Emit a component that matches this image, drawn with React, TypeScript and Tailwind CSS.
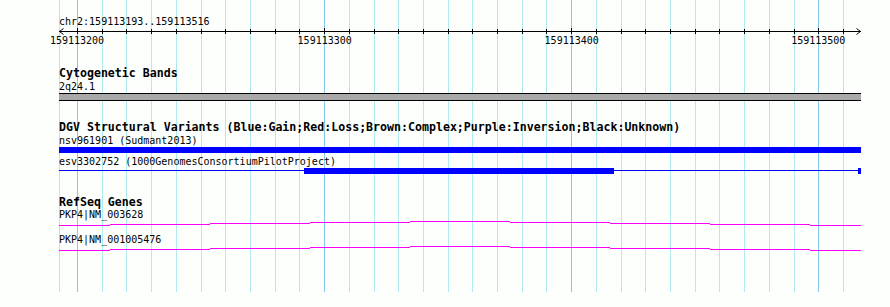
import React from 'react'

// track geometry: x of base 159113200 is 77, 2.471 px per base
const LEFT = 59
const WIDTH = 802
const STEP = 24.71
const majors = [
  { x: 77, label: '159113200' },
  { x: 324.7, label: '159113300' },
  { x: 571.7, label: '159113400' },
  { x: 818.3, label: '159113500' },
]

const gridLines = [
  { x: 59, major: false },
  ...Array.from({ length: 32 }, (_, k) => ({ x: 77 + k * STEP, major: k % 10 === 0 })),
]

const hatSegments: [number, number, number][] = [
  [59, 110, 4],
  [110, 210, 3],
  [210, 310, 2],
  [310, 410, 1],
  [410, 510, 0],
  [510, 610, 1],
  [610, 710, 2],
  [710, 810, 3],
  [810, 861, 4],
]

const mono = "font-['DejaVu_Sans_Mono','Liberation_Mono',monospace]"

const Title = ({ children, lead = 'leading-[13px]' }: { children: React.ReactNode; lead?: string }) => (
  <div className={`${mono} text-[11.6px] font-bold text-black whitespace-nowrap ${lead}`}>{children}</div>
)

const Label = ({ children, lead = 'leading-[13px]' }: { children: React.ReactNode; lead?: string }) => (
  <div className={`${mono} text-[10px] text-black whitespace-nowrap ${lead}`}>{children}</div>
)

const Grid = () => (
  <svg className="absolute left-0 top-0" width={890} height={292}>
    {gridLines.map((g, i) => (
      <line
        key={i}
        x1={Math.round(g.x) + 0.5}
        x2={Math.round(g.x) + 0.5}
        y1={0}
        y2={292}
        stroke={g.major ? '#86c8ea' : '#aeeaee'}
        strokeWidth={1}
      />
    ))}
  </svg>
)

const Ruler = () => (
  <div className="relative h-[19px]">
    <svg className="absolute left-0 top-0" width={WIDTH} height={8}>
      <line x1={0} x2={WIDTH} y1={3.5} y2={3.5} stroke="#000" />
      {gridLines.slice(1).map((g, i) => {
        const x = Math.round(g.x - LEFT) + 0.5
        return <line key={i} x1={x} x2={x} y1={g.major ? 0 : 1} y2={6} stroke="#000" />
      })}
      <polyline points="4.5,0.5 0.5,3.5 4.5,6.5" fill="none" stroke="#000" />
      <polyline points="797.5,0.5 801.5,3.5 797.5,6.5" fill="none" stroke="#000" />
    </svg>
    {majors.map((m) => (
      <span
        key={m.label}
        className={`absolute top-[6px] -translate-x-1/2 ${mono} text-[10px] leading-[13px] text-black`}
        style={{ left: m.x - LEFT }}
      >
        {m.label}
      </span>
    ))}
  </div>
)

const GeneHat = () => (
  <svg className="block" width={WIDTH} height={12}>
    {hatSegments.map(([a, b, row], i) => (
      <rect key={i} x={a - LEFT} y={row} width={b - a} height={1} fill="#ff00ff" />
    ))}
  </svg>
)

const App = () => {
  return (
    <div className="relative w-[890px] h-[307px] overflow-hidden bg-[#fcfffc]">
      <Grid />
      <div className="relative flex flex-col pl-[59px] pt-[15px] w-[861px]">
        <Label>chr2:159113193..159113516</Label>
        <Ruler />

        {/* Cytogenetic Bands */}
        <div className="mt-[20px] flex flex-col">
          <Title>Cytogenetic Bands</Title>
          <Label>2q24.1</Label>
          <div className="h-[8px] border-y border-black bg-[#aaa9aa]" />
        </div>

        {/* DGV */}
        <div className="mt-[20px] flex flex-col">
          <Title>DGV Structural Variants (Blue:Gain;Red:Loss;Brown:Complex;Purple:Inversion;Black:Unknown)</Title>
          <Label>nsv961901 (Sudmant2013)</Label>
          <div className="h-[6px] bg-[#0000ff]" />
          <div className="mt-[3px]">
            <Label lead="leading-[12px]">esv3302752 (1000GenomesConsortiumPilotProject)</Label>
          </div>
          <svg className="block" width={WIDTH} height={6}>
            <rect x={0} y={2} width={WIDTH} height={1} fill="#0000ff" />
            <rect x={304 - LEFT} y={0} width={310} height={6} fill="#0000ff" />
            <rect x={WIDTH - 3} y={0} width={3} height={6} fill="#0000ff" />
          </svg>
        </div>

        {/* RefSeq */}
        <div className="mt-[22px] flex flex-col">
          <Title lead="leading-[12px]">RefSeq Genes</Title>
          <Label>PKP4|NM_003628</Label>
          <GeneHat />
          <Label>PKP4|NM_001005476</Label>
          <GeneHat />
        </div>
      </div>
    </div>
  )
}

export default App
